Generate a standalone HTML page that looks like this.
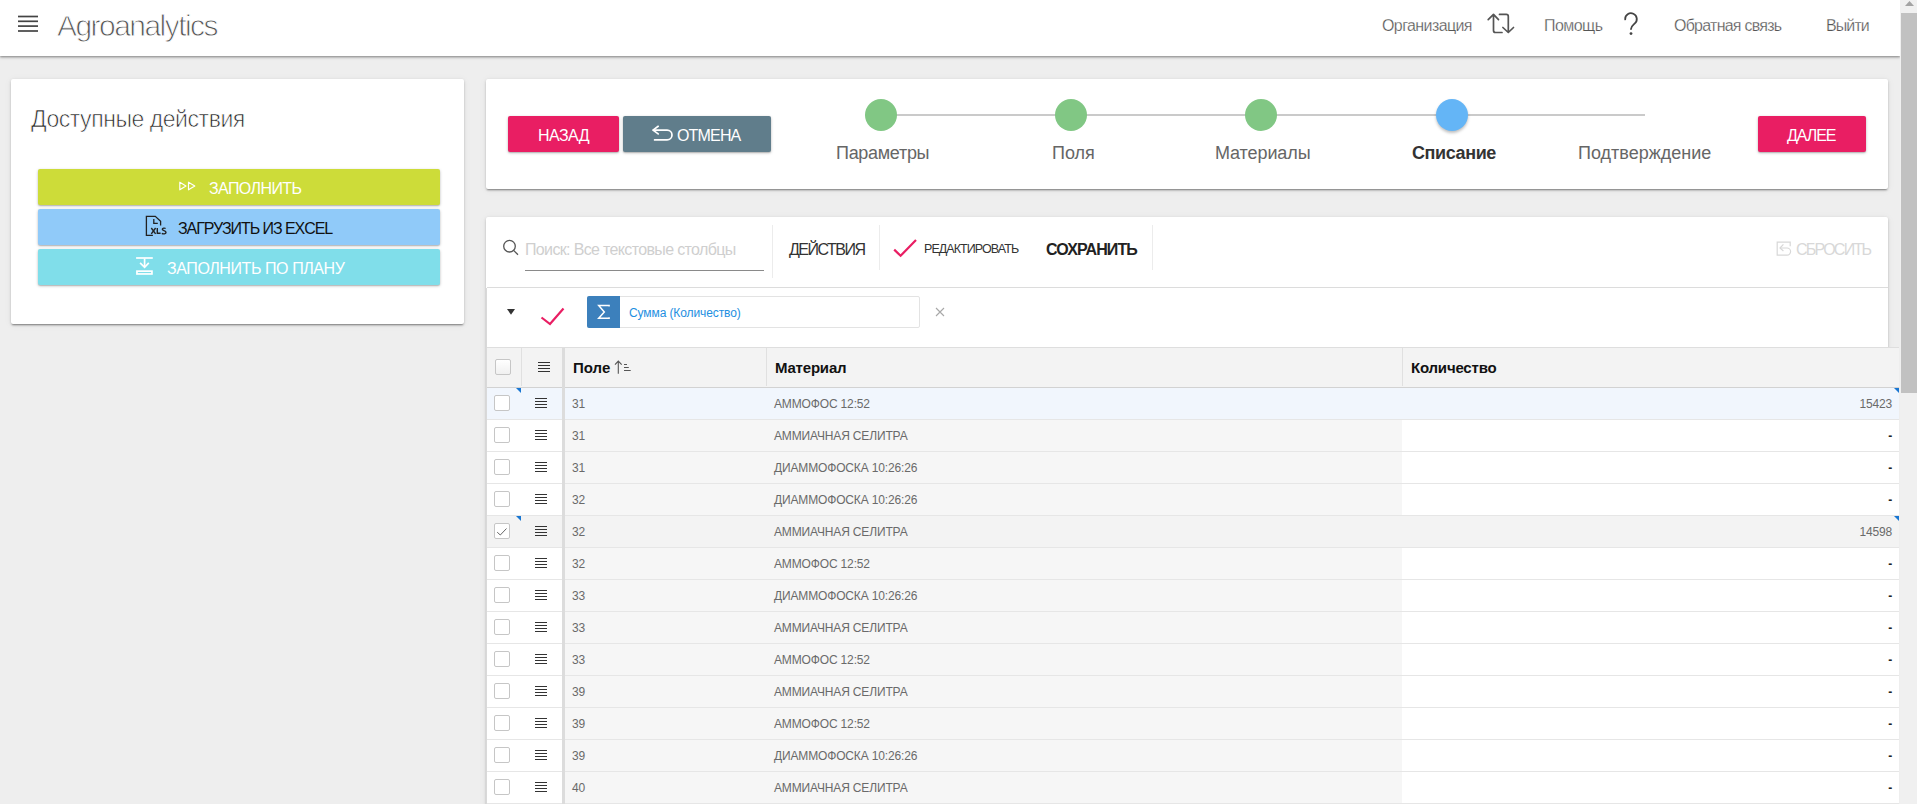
<!DOCTYPE html>
<html><head><meta charset="utf-8">
<style>
*{box-sizing:border-box;margin:0;padding:0}
html,body{width:1917px;height:804px;overflow:hidden;background:#eeeeee;font-family:"Liberation Sans",sans-serif;position:relative}
.a{position:absolute;white-space:nowrap}
.hdr{left:0;top:0;width:1900px;height:56px;background:#fff;box-shadow:0 1px 2px rgba(0,0,0,.35),0 2px 3px rgba(0,0,0,.12)}
.card{background:#fff;border-radius:2px;box-shadow:0 2px 2px -1px rgba(0,0,0,.38),0 1px 3px rgba(0,0,0,.16),0 1px 8px rgba(0,0,0,.05)}
.btn{border-radius:2px;box-shadow:0 1px 3px rgba(0,0,0,.25),0 1px 1px rgba(0,0,0,.12)}
.t{position:absolute;white-space:nowrap;line-height:1}
.sb{left:1900px;top:0;width:17px;height:804px;background:#f0f0f0}
.thumb{left:1901px;top:13px;width:16px;height:380px;background:#c1c1c1}
.row{position:absolute;left:487px;width:1412px;height:32px;background:#f6f6f6;border-bottom:1px solid #e6e6e6}
.row .q{position:absolute;left:915px;top:0;width:497px;height:31px;background:#fff}
.cb{position:absolute;width:15px;height:15px;border:1px solid #c6c6c6;border-radius:2px;background:#fff}
.mi{position:absolute;width:12px;height:10px;background:repeating-linear-gradient(#333 0 1px,transparent 1px 3px)}
.rt{position:absolute;font-size:12px;color:#6a6a6a;line-height:1;top:10px;letter-spacing:-0.15px}
</style></head><body>

<!-- header -->
<div class="a hdr"></div>
<svg class="a" style="left:18px;top:15px" width="20" height="18" viewBox="0 0 20 18"><g stroke="#444" stroke-width="1.7"><line x1="0" y1="1.5" x2="20" y2="1.5"/><line x1="0" y1="6.3" x2="20" y2="6.3"/><line x1="0" y1="11.1" x2="20" y2="11.1"/><line x1="0" y1="16" x2="20" y2="16"/></g></svg>
<div class="t" style="left:57px;top:11px;font-size:30px;color:#555;letter-spacing:-1.55px;-webkit-text-stroke:0.9px #fff">Agroanalytics</div>

<div class="t" style="left:1382px;top:18px;font-size:16px;color:#555;letter-spacing:-0.6px;-webkit-text-stroke:0.25px #fff">Организация</div>
<svg class="a" style="left:1486px;top:12px" width="30" height="24" viewBox="0 0 30 24"><g fill="none" stroke="#555" stroke-width="1.7" stroke-linecap="round" stroke-linejoin="round"><path d="M2.2 7.6 L7.5 2.4 L12.5 7.6 M7.5 2.6 V18.5 a2 2 0 0 0 2 2 H16"/><path d="M13.5 2.4 H20.3 a2 2 0 0 1 2 2 V20.3 M16.9 15.5 L22.3 20.5 L27.5 15.5"/></g></svg>
<div class="t" style="left:1544px;top:18px;font-size:16px;color:#555;letter-spacing:-0.55px;-webkit-text-stroke:0.25px #fff">Помощь</div>
<svg class="a" style="left:1620px;top:10px" width="22" height="28" viewBox="0 0 22 28"><path d="M5.2 9.4 A5.8 5.8 0 1 1 14.6 13.6 C12.4 15.6 11 16.6 11 19" fill="none" stroke="#444" stroke-width="1.8" stroke-linecap="round"/><circle cx="11" cy="23.6" r="1.4" fill="#444"/></svg>
<div class="t" style="left:1674px;top:18px;font-size:16px;color:#555;letter-spacing:-0.75px;-webkit-text-stroke:0.25px #fff">Обратная связь</div>
<div class="t" style="left:1826px;top:18px;font-size:16px;color:#555;letter-spacing:-0.9px;-webkit-text-stroke:0.25px #fff">Выйти</div>

<!-- scrollbar -->
<div class="a sb"></div>
<div class="a thumb"></div>
<svg class="a" style="left:1900px;top:0" width="17" height="13" viewBox="0 0 17 13"><path d="M5 6 L9.5 1 L14 6 Z" fill="#a3a3a3"/></svg>

<!-- left card -->
<div class="a card" style="left:11px;top:79px;width:453px;height:245px"></div>
<div class="t" style="left:31px;top:108px;font-size:23px;color:#222;letter-spacing:-0.45px;-webkit-text-stroke:0.7px #fff">Доступные действия</div>

<div class="a btn" style="left:38px;top:169px;width:402px;height:36px;background:#cddc39"></div>
<svg class="a" style="left:178px;top:180px" width="20" height="12" viewBox="0 0 20 12"><g fill="none" stroke="#fff" stroke-width="1.15" stroke-linejoin="round"><path d="M1.8 2.2 V9.8 L8 6 Z"/><path d="M10.5 2.2 V9.8 L16.8 6 Z"/></g></svg>
<div class="t" style="left:209px;top:181px;font-size:16px;color:#fff;letter-spacing:-0.6px">ЗАПОЛНИТЬ</div>

<div class="a btn" style="left:38px;top:209px;width:402px;height:36px;background:#90caf9"></div>
<svg class="a" style="left:144px;top:214px" width="24" height="24" viewBox="0 0 24 24"><g fill="none" stroke="#222" stroke-width="1.3"><path d="M8.9 21.3 H2.4 V2.4 H11.3 L16.6 7.4 V11.6"/><path d="M9.8 5.1 V9.3 H13.8"/></g><g fill="none" stroke="#222" stroke-width="1.4"><path d="M7.3 14 L11.6 19.9 M11.6 14 L7.3 19.9"/><path d="M13.3 13.9 V19.2 H16.6"/><path d="M21.6 14.5 C20.8 13.9 18.6 13.9 18.3 15.2 C18 16.7 21.9 16.5 22 18.3 C22.1 20.1 19.2 20.2 17.8 19.4"/></g></svg>
<div class="t" style="left:178px;top:221px;font-size:16px;color:#111;letter-spacing:-1.05px">ЗАГРУЗИТЬ ИЗ EXCEL</div>

<div class="a btn" style="left:38px;top:249px;width:402px;height:36px;background:#80deea"></div>
<svg class="a" style="left:134px;top:255px" width="22" height="22" viewBox="0 0 22 22"><g fill="none" stroke="#fff" stroke-width="1.7"><path d="M2.1 3 H18.8"/><path d="M10.6 3.5 V12"/><path d="M6.1 7.8 L10.6 12.3 L14.8 7.8"/><rect x="2.95" y="16.15" width="15" height="2.8"/></g></svg>
<div class="t" style="left:167px;top:261px;font-size:16px;color:#fff;letter-spacing:-0.42px">ЗАПОЛНИТЬ ПО ПЛАНУ</div>

<!-- wizard card -->
<div class="a card" style="left:486px;top:79px;width:1402px;height:110px"></div>
<div class="a btn" style="left:508px;top:116px;width:111px;height:36px;background:#e91e63"></div>
<div class="t" style="left:538px;top:128px;font-size:16px;color:#fff;letter-spacing:-0.56px">НАЗАД</div>
<div class="a btn" style="left:623px;top:116px;width:148px;height:36px;background:#607d8b"></div>
<svg class="a" style="left:648px;top:122px" width="30" height="24" viewBox="0 0 30 24"><g fill="none" stroke="#fff" stroke-width="1.7" stroke-linecap="round" stroke-linejoin="round"><path d="M10.2 4.3 L5 8.1 L10.2 11.9"/><path d="M5.4 8.1 H19.1 a4.9 4.9 0 0 1 0 9.8 H6.6"/></g></svg>
<div class="t" style="left:677px;top:128px;font-size:16px;color:#fff;letter-spacing:-0.83px">ОТМЕНА</div>

<div class="a" style="left:881px;top:114px;width:764px;height:2px;background:#cacaca"></div>
<div class="a" style="left:865px;top:99px;width:32px;height:32px;border-radius:50%;background:#81c784"></div>
<div class="a" style="left:1055px;top:99px;width:32px;height:32px;border-radius:50%;background:#81c784"></div>
<div class="a" style="left:1245px;top:99px;width:32px;height:32px;border-radius:50%;background:#81c784"></div>
<div class="a" style="left:1436px;top:99px;width:32px;height:32px;border-radius:50%;background:#64b5f6;box-shadow:0 2px 3px rgba(0,0,0,.25)"></div>
<div class="t" style="left:836px;top:144px;font-size:18px;color:#666;letter-spacing:-0.3px">Параметры</div>
<div class="t" style="left:1052px;top:144px;font-size:18px;color:#666">Поля</div>
<div class="t" style="left:1215px;top:144px;font-size:18px;color:#666;letter-spacing:-0.1px">Материалы</div>
<div class="t" style="left:1412px;top:144px;font-size:18px;color:#333;font-weight:700;letter-spacing:-0.4px">Списание</div>
<div class="t" style="left:1578px;top:144px;font-size:18px;color:#666;letter-spacing:0px">Подтверждение</div>
<div class="a btn" style="left:1758px;top:116px;width:108px;height:36px;background:#e91e63"></div>
<div class="t" style="left:1787px;top:128px;font-size:16px;color:#fff;letter-spacing:-1.04px">ДАЛЕЕ</div>

<!-- grid card -->
<div class="a card" style="left:486px;top:217px;width:1402px;height:600px"></div>
<svg class="a" style="left:501px;top:238px" width="20" height="20" viewBox="0 0 20 20"><g fill="none" stroke="#555" stroke-width="1.3"><circle cx="8.5" cy="8.2" r="5.8"/><path d="M12.6 12.4 L17 16.8"/></g></svg>
<div class="t" style="left:525px;top:242px;font-size:16px;color:#cfcfcf;letter-spacing:-0.65px">Поиск: Все текстовые столбцы</div>
<div class="a" style="left:525px;top:270px;width:239px;height:1px;background:#8a8a8a"></div>
<div class="a" style="left:772px;top:225px;width:1px;height:53px;background:#ececec"></div>
<div class="t" style="left:789px;top:242px;font-size:16px;color:#333;letter-spacing:-1.5px">ДЕЙСТВИЯ</div>
<div class="a" style="left:879px;top:225px;width:1px;height:45px;background:#ececec"></div>
<svg class="a" style="left:892px;top:238px" width="28" height="20" viewBox="0 0 28 20"><path d="M2.2 11.6 L8.6 17.8 L24 2" fill="none" stroke="#e91e63" stroke-width="2.2"/></svg>
<div class="t" style="left:924px;top:243px;font-size:12.5px;color:#333;letter-spacing:-0.93px">РЕДАКТИРОВАТЬ</div>
<div class="t" style="left:1046px;top:242px;font-size:16px;color:#222;font-weight:700;letter-spacing:-0.87px">СОХРАНИТЬ</div>
<div class="a" style="left:1152px;top:225px;width:1px;height:45px;background:#ececec"></div>
<svg class="a" style="left:1776px;top:241px" width="16" height="16" viewBox="0 0 16 16"><g fill="none" stroke="#d8d8d8" stroke-width="1.2"><path d="M14.2 5.2 V1.2 H1.2 V14.2 H11"/><path d="M7.4 3.4 L4 7 L7.4 10"/><path d="M4.2 7 H11 a3.6 3.6 0 0 1 0 7.2"/></g></svg>
<div class="t" style="left:1796px;top:242px;font-size:16px;color:#d8d8d8;letter-spacing:-1.75px">СБРОСИТЬ</div>
<div class="a" style="left:487px;top:287px;width:1401px;height:1px;background:#dcdcdc"></div>

<svg class="a" style="left:506px;top:308px" width="10" height="8" viewBox="0 0 10 8"><path d="M1 1 H9 L5 6.8 Z" fill="#333"/></svg>
<svg class="a" style="left:539px;top:305px" width="28" height="22" viewBox="0 0 28 22"><path d="M2.5 12.5 L11 19 L24.5 3.5" fill="none" stroke="#e91e63" stroke-width="2.2"/></svg>
<div class="a" style="left:587px;top:296px;width:333px;height:32px;border:1px solid #e3e3e3;border-radius:2px;background:#fff"></div>
<div class="a" style="left:587px;top:296px;width:33px;height:32px;background:#3c80bc;border-radius:2px 0 0 2px"></div>
<svg class="a" style="left:594px;top:302px" width="20" height="20" viewBox="0 0 20 20"><path d="M15.1 4.6 V3.5 H4.7 L10.3 10.1 L4.7 16.3 H15.1 V15.2" fill="none" stroke="#fff" stroke-width="1.5"/></svg>
<div class="t" style="left:629px;top:307px;font-size:12px;color:#1e8fe1;letter-spacing:-0.1px">Сумма (Количество)</div>
<svg class="a" style="left:934px;top:306px" width="12" height="12" viewBox="0 0 12 12"><path d="M2 2 L10 10 M10 2 L2 10" stroke="#a8a8a8" stroke-width="1.1"/></svg>

<!-- grid -->
<div class="a" style="left:487px;top:347px;width:1412px;height:41px;background:#f3f3f3;border-top:1px solid #dedede;border-bottom:1px solid #d2d2d2"></div>
<div class="a" style="left:521px;top:348px;width:1px;height:38px;background:#e0e0e0"></div>
<div class="a" style="left:766px;top:348px;width:1px;height:38px;background:#e0e0e0"></div>
<div class="a" style="left:1402px;top:348px;width:1px;height:38px;background:#e0e0e0"></div>
<div class="cb" style="left:495px;top:359px;width:16px;height:16px;background:linear-gradient(#fff,#f0f0f0)"></div>
<div class="mi" style="left:538px;top:362px"></div>
<div class="a" style="left:562px;top:348px;width:3px;height:39px;background:#dcdcdc"></div>
<div class="t" style="left:573px;top:360px;font-size:15px;font-weight:700;color:#111">Поле</div>
<svg class="a" style="left:612px;top:358px" width="22" height="18" viewBox="0 0 22 18"><g fill="none" stroke="#555" stroke-width="1.1"><path d="M6.3 3 V15.8 M3 6.6 L6.3 3.1 L9.7 6.6"/><path d="M12 6.5 H15 M12 9.5 H16.8 M12 12.5 H18.7"/></g></svg>
<div class="t" style="left:775px;top:360px;font-size:15px;font-weight:700;color:#111;letter-spacing:-0.2px">Материал</div>
<div class="t" style="left:1411px;top:360px;font-size:15px;font-weight:700;color:#111;letter-spacing:-0.2px">Количество</div>
<div class="row" style="top:388px;background:#f1f6fd"><div class="q" style="background:#f1f6fd"></div><div class="a" style="left:0;top:0;width:75px;height:31px;background:#f1f6fd"></div><div class="cb" style="left:7px;top:7px;width:16px;height:16px"></div><div class="mi" style="left:48px;top:10px"></div><div class="a" style="left:75px;top:-1px;width:3px;height:33px;background:#dcdcdc"></div><div class="rt" style="left:85px">31</div><div class="rt" style="left:287px">АММОФОС 12:52</div><div class="rt" style="right:7px">15423</div><svg class="a" style="left:29px;top:0" width="5" height="5" viewBox="0 0 5 5"><path d="M0 0 H5 V5 Z" fill="#1976d2"/></svg><svg class="a" style="left:1407px;top:0" width="5" height="5" viewBox="0 0 5 5"><path d="M0 0 H5 V5 Z" fill="#1976d2"/></svg></div>
<div class="row" style="top:420px;background:#f6f6f6"><div class="q" style="background:#fff"></div><div class="a" style="left:0;top:0;width:75px;height:31px;background:#fff"></div><div class="cb" style="left:7px;top:7px;width:16px;height:16px"></div><div class="mi" style="left:48px;top:10px"></div><div class="a" style="left:75px;top:-1px;width:3px;height:33px;background:#dcdcdc"></div><div class="rt" style="left:85px">31</div><div class="rt" style="left:287px">АММИАЧНАЯ СЕЛИТРА</div><div class="rt" style="right:7px;color:#222;font-weight:700">-</div></div>
<div class="row" style="top:452px;background:#f6f6f6"><div class="q" style="background:#fff"></div><div class="a" style="left:0;top:0;width:75px;height:31px;background:#fff"></div><div class="cb" style="left:7px;top:7px;width:16px;height:16px"></div><div class="mi" style="left:48px;top:10px"></div><div class="a" style="left:75px;top:-1px;width:3px;height:33px;background:#dcdcdc"></div><div class="rt" style="left:85px">31</div><div class="rt" style="left:287px">ДИАММОФОСКА 10:26:26</div><div class="rt" style="right:7px;color:#222;font-weight:700">-</div></div>
<div class="row" style="top:484px;background:#f6f6f6"><div class="q" style="background:#fff"></div><div class="a" style="left:0;top:0;width:75px;height:31px;background:#fff"></div><div class="cb" style="left:7px;top:7px;width:16px;height:16px"></div><div class="mi" style="left:48px;top:10px"></div><div class="a" style="left:75px;top:-1px;width:3px;height:33px;background:#dcdcdc"></div><div class="rt" style="left:85px">32</div><div class="rt" style="left:287px">ДИАММОФОСКА 10:26:26</div><div class="rt" style="right:7px;color:#222;font-weight:700">-</div></div>
<div class="row" style="top:516px;background:#f3f3f3"><div class="q" style="background:#f3f3f3"></div><div class="a" style="left:0;top:0;width:75px;height:31px;background:#f3f3f3"></div><div class="cb" style="left:7px;top:7px;width:16px;height:16px"></div><svg class="a" style="left:9px;top:11px" width="12" height="10" viewBox="0 0 12 10"><path d="M1.2 5.2 L4.3 8 L10.5 1.5" fill="none" stroke="#666" stroke-width="1"/></svg><div class="mi" style="left:48px;top:10px"></div><div class="a" style="left:75px;top:-1px;width:3px;height:33px;background:#dcdcdc"></div><div class="rt" style="left:85px">32</div><div class="rt" style="left:287px">АММИАЧНАЯ СЕЛИТРА</div><div class="rt" style="right:7px">14598</div><svg class="a" style="left:29px;top:0" width="5" height="5" viewBox="0 0 5 5"><path d="M0 0 H5 V5 Z" fill="#1976d2"/></svg><svg class="a" style="left:1407px;top:0" width="5" height="5" viewBox="0 0 5 5"><path d="M0 0 H5 V5 Z" fill="#1976d2"/></svg></div>
<div class="row" style="top:548px;background:#f6f6f6"><div class="q" style="background:#fff"></div><div class="a" style="left:0;top:0;width:75px;height:31px;background:#fff"></div><div class="cb" style="left:7px;top:7px;width:16px;height:16px"></div><div class="mi" style="left:48px;top:10px"></div><div class="a" style="left:75px;top:-1px;width:3px;height:33px;background:#dcdcdc"></div><div class="rt" style="left:85px">32</div><div class="rt" style="left:287px">АММОФОС 12:52</div><div class="rt" style="right:7px;color:#222;font-weight:700">-</div></div>
<div class="row" style="top:580px;background:#f6f6f6"><div class="q" style="background:#fff"></div><div class="a" style="left:0;top:0;width:75px;height:31px;background:#fff"></div><div class="cb" style="left:7px;top:7px;width:16px;height:16px"></div><div class="mi" style="left:48px;top:10px"></div><div class="a" style="left:75px;top:-1px;width:3px;height:33px;background:#dcdcdc"></div><div class="rt" style="left:85px">33</div><div class="rt" style="left:287px">ДИАММОФОСКА 10:26:26</div><div class="rt" style="right:7px;color:#222;font-weight:700">-</div></div>
<div class="row" style="top:612px;background:#f6f6f6"><div class="q" style="background:#fff"></div><div class="a" style="left:0;top:0;width:75px;height:31px;background:#fff"></div><div class="cb" style="left:7px;top:7px;width:16px;height:16px"></div><div class="mi" style="left:48px;top:10px"></div><div class="a" style="left:75px;top:-1px;width:3px;height:33px;background:#dcdcdc"></div><div class="rt" style="left:85px">33</div><div class="rt" style="left:287px">АММИАЧНАЯ СЕЛИТРА</div><div class="rt" style="right:7px;color:#222;font-weight:700">-</div></div>
<div class="row" style="top:644px;background:#f6f6f6"><div class="q" style="background:#fff"></div><div class="a" style="left:0;top:0;width:75px;height:31px;background:#fff"></div><div class="cb" style="left:7px;top:7px;width:16px;height:16px"></div><div class="mi" style="left:48px;top:10px"></div><div class="a" style="left:75px;top:-1px;width:3px;height:33px;background:#dcdcdc"></div><div class="rt" style="left:85px">33</div><div class="rt" style="left:287px">АММОФОС 12:52</div><div class="rt" style="right:7px;color:#222;font-weight:700">-</div></div>
<div class="row" style="top:676px;background:#f6f6f6"><div class="q" style="background:#fff"></div><div class="a" style="left:0;top:0;width:75px;height:31px;background:#fff"></div><div class="cb" style="left:7px;top:7px;width:16px;height:16px"></div><div class="mi" style="left:48px;top:10px"></div><div class="a" style="left:75px;top:-1px;width:3px;height:33px;background:#dcdcdc"></div><div class="rt" style="left:85px">39</div><div class="rt" style="left:287px">АММИАЧНАЯ СЕЛИТРА</div><div class="rt" style="right:7px;color:#222;font-weight:700">-</div></div>
<div class="row" style="top:708px;background:#f6f6f6"><div class="q" style="background:#fff"></div><div class="a" style="left:0;top:0;width:75px;height:31px;background:#fff"></div><div class="cb" style="left:7px;top:7px;width:16px;height:16px"></div><div class="mi" style="left:48px;top:10px"></div><div class="a" style="left:75px;top:-1px;width:3px;height:33px;background:#dcdcdc"></div><div class="rt" style="left:85px">39</div><div class="rt" style="left:287px">АММОФОС 12:52</div><div class="rt" style="right:7px;color:#222;font-weight:700">-</div></div>
<div class="row" style="top:740px;background:#f6f6f6"><div class="q" style="background:#fff"></div><div class="a" style="left:0;top:0;width:75px;height:31px;background:#fff"></div><div class="cb" style="left:7px;top:7px;width:16px;height:16px"></div><div class="mi" style="left:48px;top:10px"></div><div class="a" style="left:75px;top:-1px;width:3px;height:33px;background:#dcdcdc"></div><div class="rt" style="left:85px">39</div><div class="rt" style="left:287px">ДИАММОФОСКА 10:26:26</div><div class="rt" style="right:7px;color:#222;font-weight:700">-</div></div>
<div class="row" style="top:772px;background:#f6f6f6"><div class="q" style="background:#fff"></div><div class="a" style="left:0;top:0;width:75px;height:31px;background:#fff"></div><div class="cb" style="left:7px;top:7px;width:16px;height:16px"></div><div class="mi" style="left:48px;top:10px"></div><div class="a" style="left:75px;top:-1px;width:3px;height:33px;background:#dcdcdc"></div><div class="rt" style="left:85px">40</div><div class="rt" style="left:287px">АММИАЧНАЯ СЕЛИТРА</div><div class="rt" style="right:7px;color:#222;font-weight:700">-</div></div>
<div class="a" style="left:486px;top:288px;width:1px;height:516px;background:#d9d9d9"></div>

</body></html>
